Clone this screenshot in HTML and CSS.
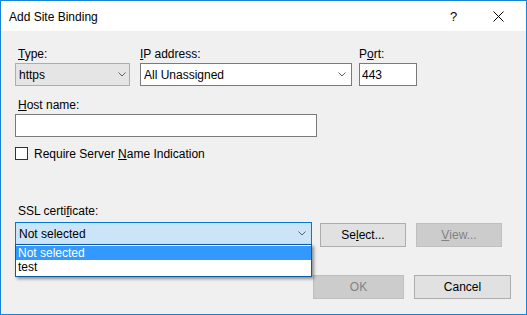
FILE: index.html
```html
<!DOCTYPE html>
<html>
<head>
<meta charset="utf-8">
<link rel="stylesheet" href="styles.css">
</head>
<body>
<div class="window">
  <div class="titlebar">
    <span class="title">Add Site Binding</span>
    <span class="help">?</span>
    <span class="close">
      <svg width="11" height="11" viewBox="0 0 11 11"><path d="M0.5 0.5 L10.5 10.5 M10.5 0.5 L0.5 10.5" stroke="#000" stroke-width="1" fill="none"/></svg>
    </span>
  </div>
  <div class="content">
    <div class="row1">
      <div class="field f-type">
        <div class="label indent"><u>T</u>ype:</div>
        <div class="combo readonly">
          <span class="value">https</span>
          <svg class="chev" width="8" height="5" viewBox="0 0 8 5"><path d="M0.5 0.5 L4 4 L7.5 0.5" stroke="#606060" fill="none"/></svg>
        </div>
      </div>
      <div class="field f-ip">
        <div class="label"><u>I</u>P address:</div>
        <div class="combo editable">
          <span class="value">All Unassigned</span>
          <svg class="chev wide" width="8" height="5" viewBox="0 0 8 5"><path d="M0.5 0.5 L4 4 L7.5 0.5" stroke="#606060" fill="none"/></svg>
        </div>
      </div>
      <div class="field f-port">
        <div class="label">P<u>o</u>rt:</div>
        <div class="textbox"><span class="value">443</span></div>
      </div>
    </div>

    <div class="field f-host">
      <div class="label indent"><u>H</u>ost name:</div>
      <div class="textbox"></div>
    </div>

    <div class="check-row">
      <span class="checkbox"></span>
      <span class="check-label">Require Server <u>N</u>ame Indication</span>
    </div>

    <div class="label indent ssl-label">SSL certi<u>f</u>icate:</div>
    <div class="ssl-row">
      <div class="combo focused">
        <span class="value">Not selected</span>
        <svg class="chev wide" width="8" height="5" viewBox="0 0 8 5"><path d="M0.5 0.5 L4 4 L7.5 0.5" stroke="#606060" fill="none"/></svg>
        <div class="droplist">
          <div class="item selected">Not selected</div>
          <div class="item">test</div>
        </div>
      </div>
      <div class="btn btn-select">Se<u>l</u>ect...</div>
      <div class="btn btn-view disabled"><u>V</u>iew...</div>
    </div>

    <div class="button-row">
      <div class="btn btn-ok disabled">OK</div>
      <div class="btn btn-cancel">Cancel</div>
    </div>
  </div>
</div>
</body>
</html>
```

FILE: styles.css
```css
html, body {
  margin: 0;
  padding: 0;
}
body {
  width: 527px;
  height: 315px;
  overflow: hidden;
  font-family: "Liberation Sans", Arial, sans-serif;
  font-size: 12px;
  color: #000;
}
u {
  text-decoration: underline;
  text-underline-offset: 1px;
}
.window {
  box-sizing: border-box;
  width: 527px;
  height: 315px;
  border: 1px solid #1883d7;
  display: flex;
  flex-direction: column;
  background: #f0f0f0;
}
.titlebar {
  height: 30px;
  flex: 0 0 30px;
  background: #fff;
  display: flex;
  align-items: center;
  padding-left: 8px;
}
.title {
  font-size: 12px;
  flex: 1;
  padding-top: 1px;
}
.help {
  font-size: 13px;
  width: 8px;
  margin-right: 35px;
}
.close {
  display: flex;
  margin-right: 22px;
  margin-top: 1px;
}
.content {
  flex: 1;
  position: relative;
  padding: 16px 0 0 14px;
}
.label {
  height: 15px;
  line-height: 15px;
  margin-bottom: 1px;
  white-space: nowrap;
}
.label.indent {
  padding-left: 3px;
}
.row1 {
  display: flex;
}
.f-type { width: 115px; }
.f-ip { width: 212px; margin-left: 10px; }
.f-port { width: 58px; margin-left: 7px; }

.combo {
  box-sizing: border-box;
  height: 23px;
  display: flex;
  align-items: center;
  position: relative;
  padding-left: 3px;
}
.combo .value { flex: 1; white-space: nowrap; }
.combo.readonly {
  background: #e5e5e5;
  border: 1px solid #adadad;
}
.combo.editable {
  background: #fff;
  border: 1px solid #7a7a7a;
}
.combo.focused {
  background: #cce4f7;
  border: 1px solid #0078d7;
  width: 297px;
  height: 23px;
}
.chev { margin-right: 3px; }
.chev.wide { margin-right: 5px; }

.textbox {
  box-sizing: border-box;
  height: 23px;
  background: #fff;
  border: 1px solid #7a7a7a;
  display: flex;
  align-items: center;
  padding-left: 2px;
}
.f-host {
  width: 302px;
  margin-top: 12px;
}
.check-row {
  display: flex;
  align-items: center;
  margin-top: 10px;
  height: 13px;
}
.checkbox {
  box-sizing: border-box;
  width: 13px;
  height: 13px;
  border: 1px solid #333;
  background: #fff;
}
.check-label {
  margin-left: 6px;
}
.ssl-label {
  margin-top: 44px;
  margin-bottom: 3px;
}
.ssl-row {
  display: flex;
  align-items: flex-start;
}
.droplist {
  position: absolute;
  left: -1px;
  right: -1px;
  top: 21px;
  box-sizing: border-box;
  height: 33px;
  background: #fff;
  border: 1px solid #0b5aa5;
  box-shadow: 2px 2px 3px rgba(0, 0, 0, 0.4);
  padding-top: 1px;
  z-index: 5;
}
.item {
  height: 14px;
  line-height: 14px;
  padding-left: 2px;
}
.item.selected {
  background: #3399ff;
  color: #fff;
}
.btn {
  box-sizing: border-box;
  height: 24px;
  background: #e1e1e1;
  border: 1px solid #adadad;
  display: flex;
  align-items: center;
  justify-content: center;
}
.btn.disabled {
  background: #cccccc;
  border-color: #bfbfbf;
  color: #838383;
}
.btn-select {
  width: 86px;
  margin-left: 8px;
  margin-top: 1px;
}
.btn-view {
  width: 86px;
  margin-left: 10px;
  margin-top: 1px;
}
.button-row {
  display: flex;
  justify-content: flex-end;
  margin-top: 28px;
  padding-right: 15px;
}
.btn-ok { width: 91px; }
.btn-cancel { width: 97px; margin-left: 10px; }
```
